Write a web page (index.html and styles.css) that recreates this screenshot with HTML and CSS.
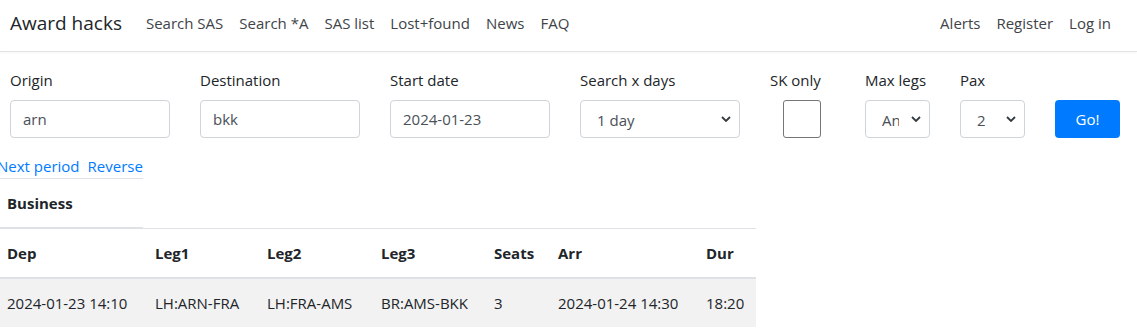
FILE: index.html
```html
<!DOCTYPE html>
<html lang="en">
  <head>
    <meta charset="UTF-8" />
    <title>Award hacks</title>
    <link rel="stylesheet" href="styles.css">
  </head>
  <body>
    <nav class="navbar">
      <a class="brand" href="#">Award hacks</a>
      <ul class="nav-links">
        <li><a href="#">Search SAS</a></li>
        <li><a href="#">Search *A</a></li>
        <li><a href="#">SAS list</a></li>
        <li><a href="#">Lost+found</a></li>
        <li><a href="#">News</a></li>
        <li><a href="#">FAQ</a></li>
      </ul>
      <ul class="nav-links nav-right">
        <li><a href="#">Alerts</a></li>
        <li><a href="#">Register</a></li>
        <li><a href="#">Log in</a></li>
      </ul>
    </nav>

    <form class="search-form" onsubmit="return false">
      <div class="field wide">
        <label for="origin">Origin</label>
        <input type="text" id="origin" value="arn" />
      </div>
      <div class="field wide">
        <label for="dest">Destination</label>
        <input type="text" id="dest" value="bkk" />
      </div>
      <div class="field wide">
        <label for="start">Start date</label>
        <input type="text" id="start" value="2024-01-23" />
      </div>
      <div class="field wide">
        <label for="days">Search x days</label>
        <select id="days">
          <option>1 day</option>
          <option>3 days</option>
          <option>7 days</option>
        </select>
      </div>
      <div class="field narrow">
        <label for="sk">SK only</label>
        <input type="checkbox" id="sk" class="check" />
      </div>
      <div class="field narrow">
        <label for="legs">Max legs</label>
        <select id="legs">
          <option>Any</option>
          <option>1</option>
          <option>2</option>
        </select>
      </div>
      <div class="field narrow">
        <label for="pax">Pax</label>
        <select id="pax">
          <option>1</option>
          <option selected>2</option>
          <option>3</option>
        </select>
      </div>
      <div class="field narrow">
        <label>&nbsp;</label>
        <button type="submit" class="btn-go">Go!</button>
      </div>
    </form>

    <div class="period-links">
      <a href="#">Next period</a>
      <a href="#">Reverse</a>
    </div>

    <table class="cabin">
      <tr><th>Business</th></tr>
    </table>

    <table class="results">
      <thead>
        <tr>
          <th class="c-dep">Dep</th>
          <th class="c-leg1">Leg1</th>
          <th class="c-leg2">Leg2</th>
          <th class="c-leg3">Leg3</th>
          <th class="c-seats">Seats</th>
          <th class="c-arr">Arr</th>
          <th class="c-dur">Dur</th>
        </tr>
      </thead>
      <tbody>
        <tr>
          <td>2024-01-23 14:10</td>
          <td>LH:ARN-FRA</td>
          <td>LH:FRA-AMS</td>
          <td>BR:AMS-BKK</td>
          <td>3</td>
          <td>2024-01-24 14:30</td>
          <td>18:20</td>
        </tr>
      </tbody>
    </table>
  </body>
</html>
```

FILE: styles.css
```css
body {
  margin: 0;
  font-family: 'Open Sans', 'Noto Sans', sans-serif;
  font-size: 15px;
  line-height: 24px;
  color: #212529;
  background: #fff;
}
a {
  text-decoration: none;
}
.navbar {
  display: flex;
  align-items: center;
  height: 46px;
  padding: 0 18px 5px 10px;
  border-bottom: 1px solid #e3e3e3;
  box-shadow: 0 1px 3px rgba(0, 0, 0, 0.04);
}
.brand {
  font-size: 19px;
  color: #212529;
  margin-right: 16px;
  line-height: 30px;
}
.nav-links {
  display: flex;
  list-style: none;
  margin: 0;
  padding: 0;
}
.nav-links a {
  display: block;
  padding: 8px;
  color: #404448;
}
.nav-right {
  margin-left: auto;
}
.search-form {
  display: flex;
  gap: 30px;
  padding: 16px 0 0 10px;
}
.field label {
  display: block;
  margin-bottom: 8px;
  line-height: 24px;
}
.field.wide {
  width: 160px;
}
.field.narrow {
  width: 65px;
}
.field input[type='text'],
.field select {
  box-sizing: border-box;
  width: 100%;
  height: 38px;
  padding: 6px 12px;
  border: 1px solid #ced4da;
  border-radius: 4px;
  font: inherit;
  color: #495057;
  background-color: #fff;
}
.field select {
  appearance: none;
  padding: 7px 30px 5px 16px;
  text-overflow: clip;
  background-image: url("data:image/svg+xml,%3Csvg xmlns='http://www.w3.org/2000/svg' width='10' height='6' viewBox='0 0 10 6'%3E%3Cpath d='M1 1l4 4 4-4' fill='none' stroke='%23343a40' stroke-width='1.8'/%3E%3C/svg%3E");
  background-repeat: no-repeat;
  background-position: right 8px center;
  background-size: 10px 6px;
}
.check {
  appearance: none;
  display: block;
  box-sizing: border-box;
  width: 38px;
  height: 38px;
  margin: 0 0 0 13px;
  border: 1px solid #767676;
  border-radius: 3px;
  background: #fff;
}
.btn-go {
  box-sizing: border-box;
  width: 65px;
  height: 38px;
  border: none;
  border-radius: 4px;
  background: #007bff;
  color: #fff;
  font: inherit;
}
.period-links {
  display: flex;
  gap: 8px;
  width: 146px;
  margin: 16px 0 0 -3px;
  white-space: nowrap;
  border-bottom: 1px solid #dee2e6;
}
.period-links a {
  color: #007bff;
}
table {
  border-collapse: collapse;
}
th {
  font-weight: 700;
  text-align: left;
}
.cabin {
  width: 143px;
}
.cabin th {
  padding: 12px 7px;
  border-bottom: 1px solid #dee2e6;
}
.results {
  width: 756px;
  border-top: 1px solid #dee2e6;
}
.results th,
.results td {
  padding: 12px 7px;
  white-space: nowrap;
}
.results thead th {
  border-bottom: 2px solid #dee2e6;
}
.results tbody tr {
  background: #f2f2f2;
}
.c-dep { width: 134px; }
.c-leg1 { width: 98px; }
.c-leg2 { width: 100px; }
.c-leg3 { width: 99px; }
.c-seats { width: 50px; }
.c-arr { width: 134px; }
```
